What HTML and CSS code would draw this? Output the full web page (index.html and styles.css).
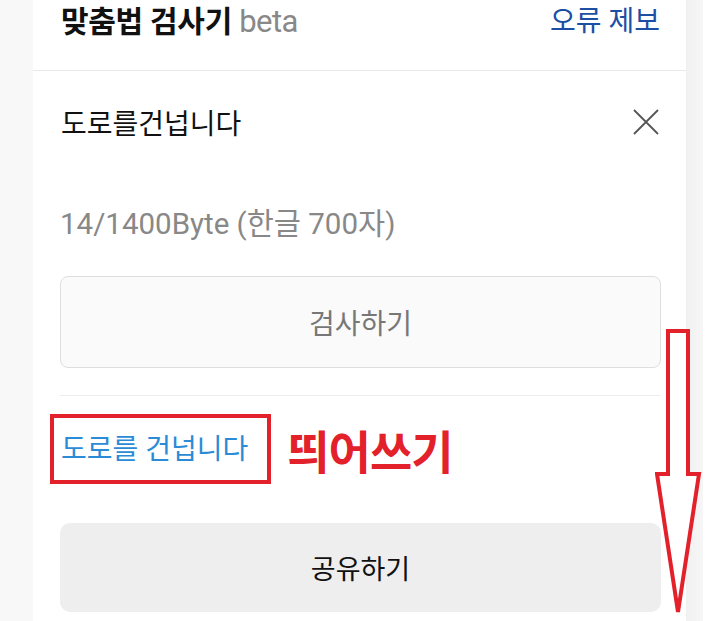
FILE: index.html
```html
<!DOCTYPE html>
<html lang="ko">
<head>
    <meta charset="UTF-8">
    <meta name="viewport" content="width=device-width, initial-scale=1.0">
    <title>맞춤법 검사기</title>
    <link rel="stylesheet" href="styles.css">
</head>
<body>
    <div class="page">
        <div class="gutter"></div>

        <div class="card">
            <div class="card-header">
                <h1 class="title">맞춤법 검사기 <span class="beta">beta</span></h1>
                <a class="report" href="#">오류 제보</a>
            </div>

            <div class="card-body">
                <div class="input-row">
                    <span class="input-text">도로를건넙니다</span>
                    <svg class="clear" width="28" height="26" viewBox="0 0 28 26">
                        <path d="M2 1 L26 25 M26 1 L2 25" stroke="#555" stroke-width="1.8" fill="none"/>
                    </svg>
                </div>

                <p class="count">14/1400Byte (한글 700자)</p>

                <button class="check-btn">검사하기</button>

                <div class="divider"></div>

                <div class="result-row">
                    <span class="result-box"><span class="result-text">도로를 건넙니다</span></span>
                    <span class="note">띄어쓰기</span>
                </div>

                <button class="share-btn">공유하기</button>
            </div>
        </div>

        <div class="rail"></div>
        <div class="edge"></div>

        <!-- annotation arrow drawn over the page -->
        <svg class="arrow" width="48" height="290" viewBox="0 0 48 290">
            <polygon points="13,2 33,2 33,145 44,145 23,283 2,145 13,145"
                     fill="#fff" stroke="#e3212b" stroke-width="4" stroke-linejoin="miter"/>
        </svg>
    </div>
</body>
</html>
```

FILE: styles.css
```css
* {
    box-sizing: border-box;
}

body {
    margin: 0;
    font-family: Roboto, "Noto Sans CJK KR", sans-serif;
    color: #111;
    background: #fff;
}

.page {
    position: relative;
    display: flex;
    width: 720px;
    height: 621px;
    overflow: hidden;
}

.gutter {
    width: 33px;
    background: #f8f8f8;
}

.card {
    width: 654px;
    background: #fff;
    border-right: 1px solid #f0f0f0;
}

.rail {
    width: 16px;
    background: linear-gradient(to right, #f1f1f1, #f6f6f6);
}

.edge {
    flex: 1;
    background: #fff;
}

.card-header {
    display: flex;
    justify-content: space-between;
    align-items: flex-start;
    height: 71px;
    padding: 2px 26px 0 28px;
    border-bottom: 1px solid #e9e9e9;
}

.title {
    margin: 0;
    font-size: 30px;
    font-weight: 700;
    line-height: 40px;
    letter-spacing: -0.3px;
}

.beta {
    font-weight: 400;
    font-size: 31px;
    color: #888;
    letter-spacing: -0.5px;
}

.report {
    font-size: 28px;
    line-height: 40px;
    color: #1c4fa3;
    text-decoration: none;
}

.card-body {
    padding: 0 26px 0 27px;
}

.input-row {
    display: flex;
    justify-content: space-between;
    align-items: center;
    height: 102px;
    padding-left: 1px;
}

.input-text {
    font-size: 28px;
}

.count {
    margin: 0;
    height: 103px;
    padding-top: 32px;
    font-size: 29.5px;
    line-height: 38px;
    color: #888;
}

.check-btn,
.share-btn {
    display: block;
    width: 601px;
    font-family: inherit;
    cursor: pointer;
}

.check-btn {
    height: 92px;
    border: 1px solid #dedede;
    border-radius: 8px;
    background: #fafafa;
    color: #777;
    font-size: 28px;
}

.divider {
    height: 1px;
    margin-top: 27px;
    background: #ededed;
}

.result-row {
    display: flex;
    align-items: center;
    height: 127px;
    padding-bottom: 22px;
}

.result-box {
    display: flex;
    align-items: center;
    height: 70px;
    margin-left: -10px;
    padding: 0 19px 4px 7px;
    border: 4px solid #e3212b;
}

.result-text {
    font-size: 28px;
    color: #2b8bd6;
}

.note {
    margin-left: 16px;
    font-size: 46px;
    font-weight: 700;
    color: #e3212b;
    letter-spacing: -1px;
}

.share-btn {
    height: 89px;
    border: none;
    border-radius: 10px;
    background: #eeeeee;
    color: #111;
    font-size: 27px;
}

.arrow {
    position: absolute;
    left: 655px;
    top: 329px;
}
```
